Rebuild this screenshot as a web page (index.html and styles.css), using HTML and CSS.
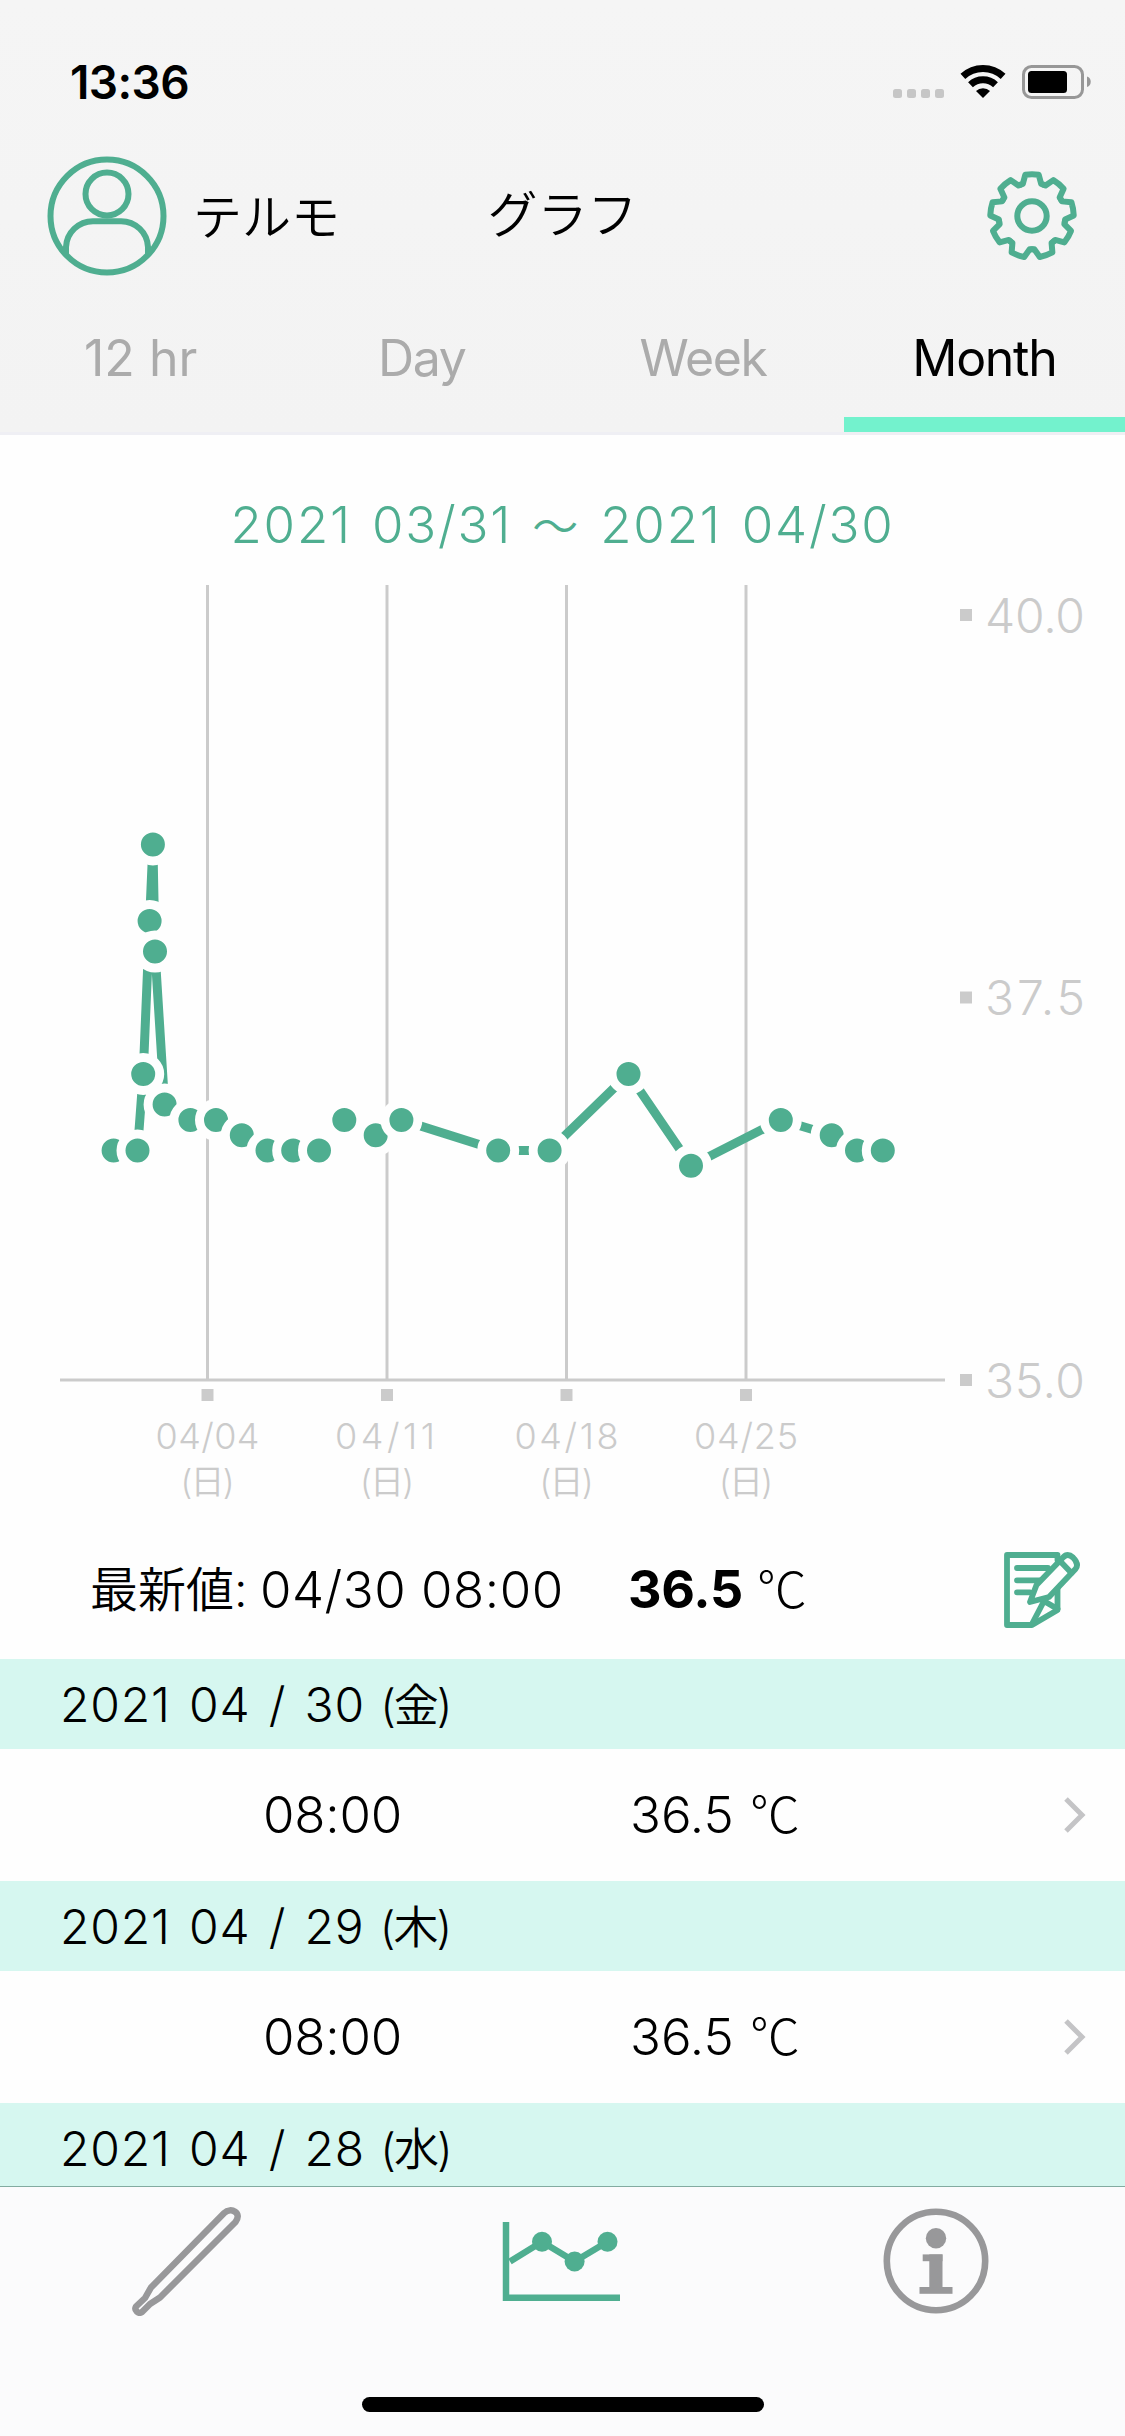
FILE: index.html
```html
<!DOCTYPE html>
<html lang="ja">
<head>
    <meta charset="UTF-8">
    <meta name="viewport" content="width=device-width, initial-scale=1.0">
    <title>グラフ</title>
    <link rel="stylesheet" href="styles.css">
</head>
<body>

<header class="header">
    <div class="status">
        <span class="time">13:36</span>
        <svg class="status-icons" width="200" height="36" viewBox="0 0 200 36">
            <g fill="#c6c6c6">
                <rect x="1" y="25" width="9" height="9" rx="2.5"/>
                <rect x="15" y="25" width="9" height="9" rx="2.5"/>
                <rect x="29" y="25" width="9" height="9" rx="2.5"/>
                <rect x="43" y="25" width="9" height="9" rx="2.5"/>
            </g>
            <g transform="translate(91 34)">
                <path d="M0 0L-7-7A10 10 0 0 1 7-7Z"/>
                <g fill="none" stroke="#000" stroke-width="7">
                    <path d="M-12.5-13.2A18.2 18.2 0 0 1 12.5-13.2"/>
                    <path d="M-20.1-21.6A29.5 29.5 0 0 1 20.1-21.6"/>
                </g>
            </g>
            <rect x="131.5" y="2.5" width="59" height="31" rx="8" fill="none" stroke="#979797" stroke-width="3"/>
            <rect x="136" y="7" width="39" height="22" rx="3.5"/>
            <path d="M195 12.500C200 14 200 21.500 195 23Z" fill="#979797"/>
        </svg>
    </div>
    <div class="nav">
        <div class="user">
            <svg width="120" height="120" viewBox="-60 -60 120 120" fill="none" stroke="#4fae90" stroke-width="6">
                <circle r="56.500"/>
                <circle cy="-22" r="21.500"/>
                <path d="M-41 39V31A27 27 0 0 1-14 5.200H14A27 27 0 0 1 41 31V39"/>
            </svg>
            <span>テルモ</span>
        </div>
        <h1>グラフ</h1>
        <svg class="gear" width="92" height="92" viewBox="-46 -46 92 92" fill="none" stroke="#4fae90" stroke-width="6" stroke-linejoin="round" stroke-linecap="round">
            <circle r="14.700"/>
            <path id="tooth" d="M-11.400-31.300L-9.200-32L-6.700-41.200Q0-42.200 6.700-41.200L9.200-32L11.400-31.300"/>
            <use href="#tooth" transform="rotate(40)"/>
            <use href="#tooth" transform="rotate(80)"/>
            <use href="#tooth" transform="rotate(120)"/>
            <use href="#tooth" transform="rotate(160)"/>
            <use href="#tooth" transform="rotate(200)"/>
            <use href="#tooth" transform="rotate(240)"/>
            <use href="#tooth" transform="rotate(280)"/>
            <use href="#tooth" transform="rotate(320)"/>
        </svg>
    </div>
    <nav class="tabs">
        <a>12 hr</a>
        <a>Day</a>
        <a>Week</a>
        <a class="active">Month</a>
    </nav>
</header>

<main>
    <h2 class="range">2021 03/31 <span>～</span> 2021 04/30</h2>
    <svg class="chart" width="1125" height="935" viewBox="0 585 1125 935">
        <g stroke="#cbcbcb" stroke-width="3">
            <path d="M207.500 585V1380M387 585V1380M566.500 585V1380M746 585V1380M60 1380H945"/>
        </g>
        <g fill="#cbcbcb">
            <rect x="201.500" y="1389" width="12" height="12"/>
            <rect x="381" y="1389" width="12" height="12"/>
            <rect x="560.500" y="1389" width="12" height="12"/>
            <rect x="740" y="1389" width="12" height="12"/>
            <rect x="960" y="609" width="12" height="12"/>
            <rect x="960" y="991.500" width="12" height="12"/>
            <rect x="960" y="1374" width="12" height="12"/>
        </g>
        <g class="y-labels">
            <text x="985" y="633" textLength="100">40.0</text>
            <text x="985" y="1015" textLength="100">37.5</text>
            <text x="985" y="1398" textLength="100">35.0</text>
        </g>
        <g class="x-labels">
            <text x="207.500" y="1449" textLength="104">04/04</text>
            <text x="385" y="1449" textLength="100">04/11</text>
            <text x="566.500" y="1449" textLength="104">04/18</text>
            <text x="746" y="1449" textLength="104">04/25</text>
            <text class="wday" x="207.500" y="1494" textLength="54">(日)</text>
            <text class="wday" x="387" y="1494" textLength="54">(日)</text>
            <text class="wday" x="566.500" y="1494" textLength="54">(日)</text>
            <text class="wday" x="746" y="1494" textLength="54">(日)</text>
        </g>
        <polyline class="line" points="113.600,1150.500 137.500,1150.500 143.200,1074 149.600,921 152.900,844.500 155,951.600 164.600,1104.600 190.400,1120 216,1120 241.800,1135.200 267.500,1150.500 293.200,1150.500 319,1150.500 344.300,1120 375.700,1135.200 401.400,1120 498.200,1150.500 549.600,1150.500 628.500,1074 691,1165.800 780.800,1120 831.700,1135.200 857,1150.500 882.800,1150.500"/>
        <g class="dots">
            <circle cx="113.600" cy="1150.500" r="16.500"/>
            <circle cx="137.500" cy="1150.500" r="16.500"/>
            <circle cx="143.200" cy="1074" r="16.500"/>
            <circle cx="149.600" cy="921" r="16.500"/>
            <circle cx="152.900" cy="844.500" r="16.500"/>
            <circle cx="155" cy="951.600" r="16.500"/>
            <circle cx="164.600" cy="1104.600" r="16.500"/>
            <circle cx="190.400" cy="1120" r="16.500"/>
            <circle cx="216" cy="1120" r="16.500"/>
            <circle cx="241.800" cy="1135.200" r="16.500"/>
            <circle cx="267.500" cy="1150.500" r="16.500"/>
            <circle cx="293.200" cy="1150.500" r="16.500"/>
            <circle cx="319" cy="1150.500" r="16.500"/>
            <circle cx="344.300" cy="1120" r="16.500"/>
            <circle cx="375.700" cy="1135.200" r="16.500"/>
            <circle cx="401.400" cy="1120" r="16.500"/>
            <circle cx="498.200" cy="1150.500" r="16.500"/>
            <circle cx="549.600" cy="1150.500" r="16.500"/>
            <circle cx="628.500" cy="1074" r="16.500"/>
            <circle cx="691" cy="1165.800" r="16.500"/>
            <circle cx="780.800" cy="1120" r="16.500"/>
            <circle cx="831.700" cy="1135.200" r="16.500"/>
            <circle cx="857" cy="1150.500" r="16.500"/>
            <circle cx="882.800" cy="1150.500" r="16.500"/>
        </g>
    </svg>

    <div class="latest">
        <span class="latest-label">最新値:</span>
        <span class="latest-date">04/30 08:00</span>
        <span class="latest-temp"><b>36.5</b></span>
        <span class="unit">℃</span>
        <svg class="memo" width="78" height="78" viewBox="0 0 78 78" fill="none" stroke="#4fae90" stroke-width="5.800" stroke-linejoin="round" stroke-linecap="round">
            <path d="M54.500 9V4H4V74H29L54.500 59V36"/>
            <path d="M29 73L41 50L54.500 58"/>
            <path d="M14 17H45M14 29.300H37M14 41.300H27"/>
            <path d="M27 51L33.500 34L60 6.500Q64.500 1.500 70 6.500Q76.500 13 72.500 18L46 46Z" fill="#fefefe"/>
            <path d="M57 10L68.500 22"/>
        </svg>
    </div>

    <section class="list">
        <h3>2021 04 / 30 <span>(金)</span></h3>
        <div class="row">
            <span class="row-time">08:00</span>
            <span class="row-temp">36.5</span>
            <span class="unit">℃</span>
            <svg class="chevron" width="26" height="40" viewBox="0 0 26 40"><path d="M4 4L20 20L4 36"/></svg>
        </div>
        <h3>2021 04 / 29 <span>(木)</span></h3>
        <div class="row">
            <span class="row-time">08:00</span>
            <span class="row-temp">36.5</span>
            <span class="unit">℃</span>
            <svg class="chevron" width="26" height="40" viewBox="0 0 26 40"><path d="M4 4L20 20L4 36"/></svg>
        </div>
        <h3>2021 04 / 28 <span>(水)</span></h3>
    </section>
</main>

<footer class="tabbar">
    <div class="tabbar-items">
        <svg width="110" height="110" viewBox="133 2206 110 110" fill="none" stroke="#98989a" stroke-width="6.500" stroke-linejoin="round">
            <path d="M225.200 2213L152 2287.500L146 2298L137 2306.500A4.200 4.200 0 0 0 143 2312L151 2304L161 2297.500L236.500 2222C243.500 2213 232 2206.500 225.200 2213Z"/>
        </svg>
        <svg width="122" height="84" viewBox="501 2220 122 84" fill="none" stroke="#4fae90" stroke-width="6.500">
            <path d="M506 2222V2297.700H620"/>
            <path d="M510 2261.500L542 2241.700L574.600 2261.500L607.500 2241.700"/>
            <g fill="#4fae90" stroke="none">
                <circle cx="542" cy="2241.700" r="10"/>
                <circle cx="574.600" cy="2261.500" r="10"/>
                <circle cx="607.500" cy="2241.700" r="10"/>
            </g>
        </svg>
        <svg width="106" height="106" viewBox="-53 -53 106 106" fill="#98989a">
            <circle r="49.200" fill="none" stroke="#98989a" stroke-width="6.600"/>
            <circle cy="-22.800" r="10.200"/>
            <rect x="-13.300" y="-6.600" width="19.800" height="6.800"/>
            <rect x="-6.700" y="-6.600" width="13.200" height="34"/>
            <rect x="-16.500" y="26" width="33" height="6.800"/>
        </svg>
    </div>
    <div class="home-indicator"></div>
</footer>

</body>
</html>
```
FILE: styles.css
```css
* {
    box-sizing: border-box;
}
body {
    margin: 0;
    width: 1125px;
    height: 2436px;
    overflow: hidden;
    display: flex;
    flex-direction: column;
    font-family: Inter, "Noto Sans CJK JP", sans-serif;
    font-size: 51px;
    font-weight: 350;
    line-height: 60px;
    color: #000;
    background: #fefefe;
}
svg {
    display: block;
    flex: none;
}
h1, h2, h3 {
    margin: 0;
    font-weight: 350;
}
.header {
    height: 435px;
    background: linear-gradient(#f5f5f5, #f3f3f3);
    border-bottom: 3px solid #efeff4;
}
.status {
    height: 148px;
    padding: 16px 33px 0 70px;
    display: flex;
    align-items: center;
    justify-content: space-between;
}
.time {
    font-size: 46px;
    font-weight: 600;
    letter-spacing: -0.6px;
}
.nav {
    height: 136px;
    padding: 0 47px;
    display: grid;
    grid-template-columns: 1fr auto 1fr;
    align-items: center;
}
.user {
    display: flex;
    align-items: center;
    gap: 26px;
}
.nav h1 {
    font-size: 50px;
    padding-bottom: 3px;
}
.user span {
    font-size: 49px;
    padding-top: 3px;
}
.gear {
    justify-self: end;
}
.tabs {
    height: 148px;
    display: grid;
    grid-template-columns: repeat(4, 1fr);
}
.tabs a {
    padding-top: 44px;
    text-align: center;
    font-size: 50px;
    font-weight: 400;
    letter-spacing: -1.3px;
    color: #ababab;
    border-bottom: 15px solid transparent;
}
.tabs a:first-child {
    letter-spacing: 0;
}
.tabs .active {
    color: #000;
    border-bottom-color: #73f2cd;
}
.range {
    height: 150px;
    padding-top: 60px;
    text-align: center;
    font-size: 51px;
    letter-spacing: 1.8px;
    word-spacing: 4px;
    color: #4fae90;
}
.range span {
    font-size: 46px;
}
.y-labels, .x-labels {
    fill: #cbcbcb;
}
.y-labels {
    font-size: 48px;
}
.x-labels {
    font-size: 36px;
    text-anchor: middle;
}
.x-labels .wday {
    font-size: 34px;
}
.line {
    fill: none;
    stroke: #4fae90;
    stroke-width: 9;
}
.dots {
    fill: #4fae90;
    stroke: #fefefe;
    stroke-width: 9;
}
.latest {
    height: 139px;
    padding-left: 90px;
    display: flex;
    align-items: center;
}
.latest-label {
    width: 170px;
    font-size: 48px;
}
.latest-date {
    width: 368px;
    letter-spacing: 0.5px;
}
.latest-temp {
    width: 129px;
}
.latest-temp b {
    font-size: 52px;
    font-weight: 700;
    letter-spacing: -0.3px;
}
.unit {
    font-family: "Noto Sans CJK JP", sans-serif;
    font-size: 50px;
    font-weight: 300;
    padding-bottom: 8px;
}
.memo {
    margin-left: auto;
    margin-right: 44px;
}
.list h3 {
    height: 90px;
    padding-left: 60px;
    font-size: 48px;
    line-height: 91px;
    letter-spacing: 0.8px;
    word-spacing: 4px;
    background: #d6f7f0;
}
.list h3 span {
    margin-left: -3px;
    font-size: 45px;
    letter-spacing: -2px;
}
.row {
    height: 132px;
    padding: 0 37px 0 263px;
    display: flex;
    align-items: center;
}
.row-time {
    width: 367px;
    letter-spacing: -0.2px;
}
.row-temp {
    width: 120px;
}
.chevron {
    margin-left: auto;
    fill: none;
    stroke: #c4c4c6;
    stroke-width: 5;
}
main {
    height: 1751px;
    overflow: hidden;
    flex: none;
}
.tabbar {
    flex: 1;
    border-top: 1px solid #82aba0;
    background: #fbfbfc;
}
.tabbar-items {
    height: 210px;
    padding: 19px 0 0 132px;
    display: flex;
    align-items: flex-start;
}
.tabbar-items svg:nth-child(2) {
    margin: 14px 260px 0 259px;
}
.tabbar-items svg:nth-child(3) {
    margin-top: 2px;
}
.home-indicator {
    width: 402px;
    height: 15px;
    margin: 0 auto;
    border-radius: 8px;
    background: #000;
}
```
